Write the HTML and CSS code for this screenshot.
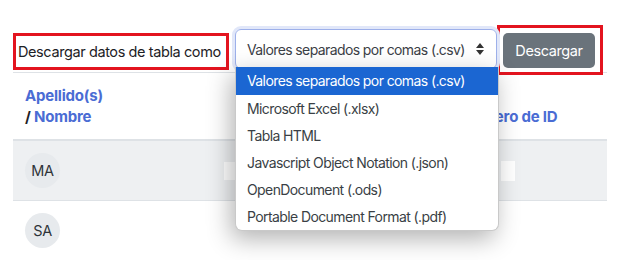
FILE: index.html
```html
<!DOCTYPE html>
<html lang="es">
<head>
    <meta charset="UTF-8">
    <title>Descargar datos de tabla</title>
    <link rel="stylesheet" href="styles.css">
</head>
<body>
  <div class="page">
    <div class="toolbar">
        <label class="dl-label">Descargar datos de tabla como</label>
        <div class="select-wrap">
            <div class="select">
                <span>Valores separados por comas (.csv)</span>
                <svg class="arrows" width="8" height="12" viewBox="0 0 8 12"><path d="M4 0 L8 5 L0 5 Z M0 7 L8 7 L4 12 Z" fill="#333"/></svg>
            </div>
            <ul class="options">
                <li class="active">Valores separados por comas (.csv)</li>
                <li>Microsoft Excel (.xlsx)</li>
                <li>Tabla HTML</li>
                <li>Javascript Object Notation (.json)</li>
                <li>OpenDocument (.ods)</li>
                <li>Portable Document Format (.pdf)</li>
            </ul>
        </div>
        <div class="btn-box">
            <button class="btn">Descargar</button>
        </div>
    </div>

    <table class="data">
        <thead>
            <tr>
                <th class="col-name"><a>Apellido(s)</a><br>/ <a>Nombre</a></th>
                <th class="col-mid"></th>
                <th class="col-id"><a>Número de ID</a></th>
            </tr>
        </thead>
        <tbody>
            <tr class="odd">
                <td class="col-name"><span class="avatar">MA</span></td>
                <td class="col-mid"><span class="blank b1"></span></td>
                <td class="col-id"><span class="blank b3"></span></td>
            </tr>
            <tr class="last">
                <td class="col-name"><span class="avatar">SA</span></td>
                <td class="col-mid"><span class="blank b2"></span></td>
                <td class="col-id"><span class="blank b4"></span></td>
            </tr>
        </tbody>
    </table>
  </div>
</body>
</html>
```

FILE: styles.css
```css
body {
    margin: 0;
    background: #fff;
    font-family: Inter, "Noto Sans", sans-serif;
    color: #1d2125;
    letter-spacing: -0.4px;
}

.page {
    width: 594px;
    padding: 25px 0 0 13px;
    position: relative;
}

.toolbar {
    display: flex;
    align-items: flex-start;
    height: 47px;
    border-bottom: 1px solid #dee2e6;
}

.dl-label {
    margin-top: 8px;
    width: 216px;
    height: 37px;
    box-sizing: border-box;
    border: 3px solid #e3141f;
    padding-left: 2px;
    font-size: 14.5px;
    line-height: 31px;
    white-space: nowrap;
}

.select-wrap {
    position: relative;
    margin: 4px 0 0 6px;
    width: 262px;
}

.select {
    height: 40px;
    box-sizing: border-box;
    border: 1px solid #9db0ea;
    border-radius: 6px;
    box-shadow: 0 0 0 3px #e1e7f9;
    padding: 0 11px;
    display: flex;
    align-items: center;
    justify-content: space-between;
    font-size: 14px;
    letter-spacing: -0.6px;
    color: #3b4046;
    white-space: nowrap;
}

.arrows {
    margin-right: 1px;
}

.options {
    position: absolute;
    top: 38px;
    left: 0;
    width: 262px;
    margin: 0;
    padding: 0;
    list-style: none;
    background: #fff;
    border: 1px solid #c9c9c9;
    border-top: none;
    border-radius: 0 0 7px 7px;
    box-shadow: -4px 8px 24px rgba(0, 0, 0, 0.3);
    z-index: 5;
    overflow: hidden;
}

.options li {
    height: 27px;
    line-height: 27px;
    padding-left: 11px;
    font-size: 14px;
    letter-spacing: -0.6px;
    color: #3a3f45;
    white-space: nowrap;
}

.options li.active {
    background: #1b66d2;
    color: #fff;
    height: 28px;
    line-height: 28px;
}

.btn-box {
    width: 106px;
    height: 50px;
    box-sizing: border-box;
    border: 3px solid #e3141f;
    padding: 5px 0 0 3px;
}

.btn {
    width: 92px;
    height: 35px;
    border: none;
    border-radius: 5px;
    background: #6a737b;
    color: #fff;
    font-family: inherit;
    font-size: 14.5px;
    letter-spacing: -0.4px;
}

.data {
    width: 594px;
    border-collapse: collapse;
}

.data th {
    height: 54px;
    text-align: left;
    vertical-align: top;
    padding: 12px 0 0 12px;
    font-size: 15px;
    line-height: 21px;
    letter-spacing: -0.2px;
    border-bottom: 2px solid #dee2e6;
}

.data th a {
    color: #4a6cd4;
    font-weight: 700;
}

.data th.col-id {
    padding-top: 33px;
    height: 33px;
}

.col-id {
    width: 146px;
}

.col-name {
    width: 175px;
}

.data td {
    height: 59px;
    padding: 0 0 0 12px;
    border-bottom: 1px solid #dee2e6;
    vertical-align: middle;
}

.data tr.last td {
    border-bottom: none;
}

.data tr.odd td {
    background: #eef0f2;
}

.avatar {
    display: inline-flex;
    align-items: center;
    justify-content: center;
    width: 35px;
    height: 35px;
    border-radius: 50%;
    background: #e7eaed;
    font-size: 14.5px;
    color: #2f3439;
}

.blank {
    display: block;
    background: #fff;
}

.b1 { width: 26px; height: 18px; margin-left: 12px; }
.b2 { width: 25px; height: 23px; margin-left: 7px; margin-top: 8px; }
.b3 { width: 14px; height: 20px; margin-left: 40px; }
.b4 { width: 27px; height: 17px; margin-left: 39px; }
```
